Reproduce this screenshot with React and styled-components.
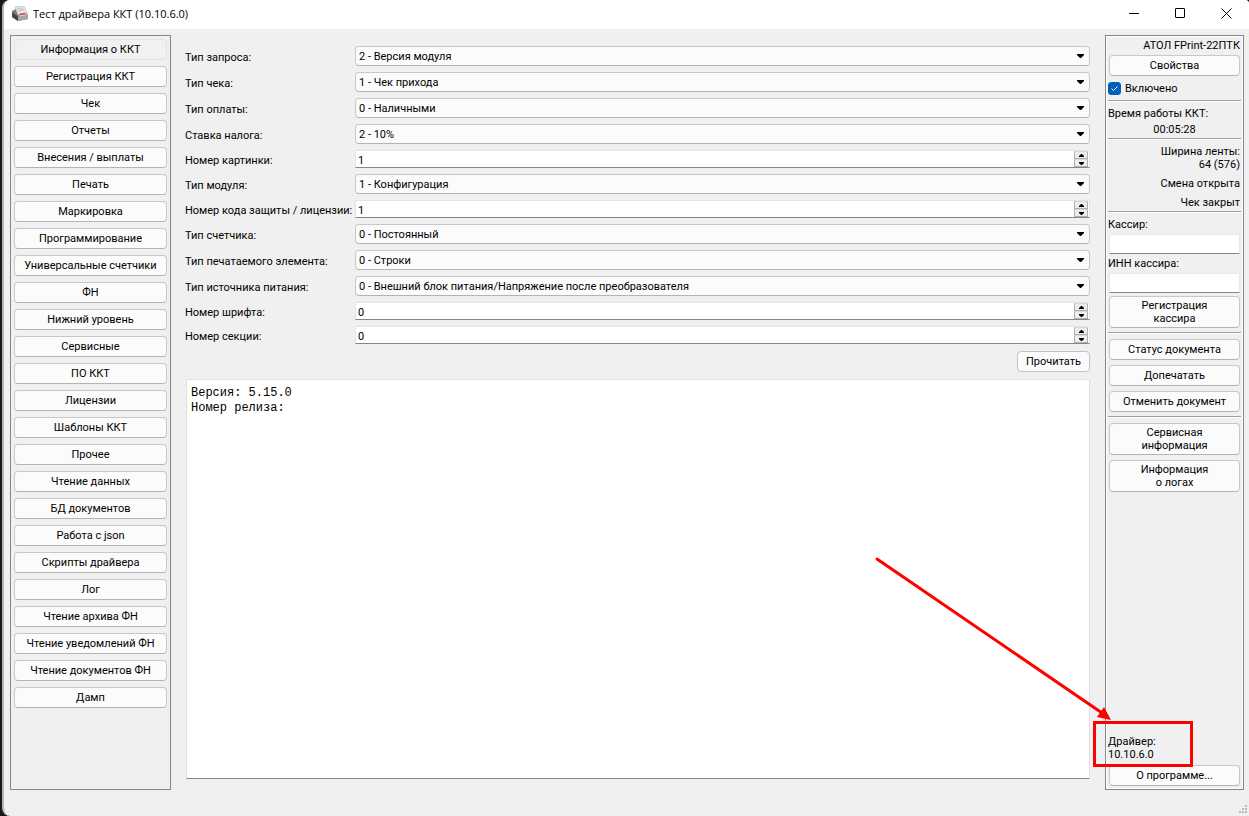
import React, { useState } from "react";
import styled, { createGlobalStyle } from "styled-components";

const navItems = [
  "Информация о ККТ",
  "Регистрация ККТ",
  "Чек",
  "Отчеты",
  "Внесения / выплаты",
  "Печать",
  "Маркировка",
  "Программирование",
  "Универсальные счетчики",
  "ФН",
  "Нижний уровень",
  "Сервисные",
  "ПО ККТ",
  "Лицензии",
  "Шаблоны ККТ",
  "Прочее",
  "Чтение данных",
  "БД документов",
  "Работа с json",
  "Скрипты драйвера",
  "Лог",
  "Чтение архива ФН",
  "Чтение уведомлений ФН",
  "Чтение документов ФН",
  "Дамп",
];

const fields = [
  { id: "request", label: "Тип запроса:", value: "2 - Версия модуля" },
  { id: "receipt", label: "Тип чека:", value: "1 - Чек прихода" },
  { id: "payment", label: "Тип оплаты:", value: "0 - Наличными" },
  { id: "tax", label: "Ставка налога:", value: "2 - 10%" },
  { id: "picture", label: "Номер картинки:", value: 1, spin: true },
  { id: "module", label: "Тип модуля:", value: "1 - Конфигурация" },
  { id: "license", label: "Номер кода защиты / лицензии:", value: 1, spin: true },
  { id: "counter", label: "Тип счетчика:", value: "0 - Постоянный" },
  { id: "element", label: "Тип печатаемого элемента:", value: "0 - Строки" },
  {
    id: "power",
    label: "Тип источника питания:",
    value: "0 - Внешний блок питания/Напряжение после преобразователя",
  },
  { id: "font", label: "Номер шрифта:", value: 0, spin: true },
  { id: "section", label: "Номер секции:", value: 0, spin: true },
];

function SpinBox({ id, initial }) {
  const [value, setValue] = useState(initial);

  return (
    <Spin>
      <input
        id={id}
        type="text"
        inputMode="numeric"
        value={value}
        onChange={(e) => setValue(Number(e.target.value) || 0)}
      />
      <div className="steps">
        <button type="button" aria-label="Больше" onClick={() => setValue(value + 1)}>
          <svg width="5" height="3" viewBox="0 0 5 3">
            <path d="M0 3V2L2 0H3L5 2V3z" />
          </svg>
        </button>
        <button
          type="button"
          aria-label="Меньше"
          onClick={() => setValue(Math.max(0, value - 1))}
        >
          <svg width="5" height="3" viewBox="0 0 5 3">
            <path d="M0 0V1L2 3H3L5 1V0z" />
          </svg>
        </button>
      </div>
    </Spin>
  );
}

function ComboBox({ id, value }) {
  return (
    <Combo>
      <select id={id} defaultValue={value}>
        <option>{value}</option>
      </select>
      <svg width="7" height="4" viewBox="0 0 7 4">
        <path d="M0 0H7V1L4 4H3L0 1z" />
      </svg>
    </Combo>
  );
}

function PrinterLogo() {
  return (
    <svg width="17" height="16" viewBox="0 0 17 16">
      <path d="M0 5L4 3L15 7L16 9V13L6 15L0 11z" fill="#7d7d7d" />
      <path d="M0 6L6 10.500V15L0 11z" fill="#454545" />
      <path d="M6 10.500L16 9V13L6 15z" fill="#a5a3a3" />
      <path d="M3 1L12 0L15 7L6 9z" fill="#e6e6e6" stroke="#b0b0b0" strokeWidth=".6" />
      <path d="M5 2L11 1.500L12.500 4.500L6.500 5.500z" fill="#cfd2d2" />
      <path d="M7 8L14 7L15 9L8 10.500z" fill="#e2d4d4" />
      <path d="M7.500 8.500L13.500 7.500" stroke="#d93b45" strokeWidth="1.300" />
    </svg>
  );
}

export default function App() {
  const [active, setActive] = useState(0);
  const [enabled, setEnabled] = useState(true);

  return (
    <>
      <GlobalStyle />
      <Desktop>
        <Window>
          <TitleBar>
            <PrinterLogo />
            <h1>Тест драйвера ККТ (10.10.6.0)</h1>
            <CaptionButton type="button" aria-label="Свернуть">
              <svg width="11" height="11" viewBox="0 0 11 11">
                <path d="M0 5.500H10" />
              </svg>
            </CaptionButton>
            <CaptionButton type="button" aria-label="Развернуть">
              <svg width="11" height="11" viewBox="0 0 11 11">
                <rect x=".5" y=".5" width="9" height="9" rx=".5" />
              </svg>
            </CaptionButton>
            <CaptionButton type="button" aria-label="Закрыть">
              <svg width="11" height="11" viewBox="0 0 11 11">
                <path d="M.5 .5L10.500 10.500M10.500 .5L.5 10.500" />
              </svg>
            </CaptionButton>
          </TitleBar>

          <Body>
            <NavPanel>
              {navItems.map((item, i) => (
                <Button
                  key={item}
                  type="button"
                  $active={i === active}
                  onClick={() => setActive(i)}
                >
                  {item}
                </Button>
              ))}
            </NavPanel>

            <Content>
              <Form>
                {fields.map((f) => (
                  <React.Fragment key={f.id}>
                    <label htmlFor={f.id}>{f.label}</label>
                    {f.spin ? (
                      <SpinBox id={f.id} initial={f.value} />
                    ) : (
                      <ComboBox id={f.id} value={f.value} />
                    )}
                  </React.Fragment>
                ))}
              </Form>
              <ReadButton type="button">Прочитать</ReadButton>
              <Output
                aria-label="Результат"
                readOnly
                value={"Версия: 5.15.0\nНомер релиза:"}
              />
            </Content>

            <StatusPanel>
              <Text $align="right">АТОЛ FPrint-22ПТК</Text>
              <Button type="button">Свойства</Button>
              <CheckLabel>
                <span className="box">
                  <input
                    type="checkbox"
                    checked={enabled}
                    onChange={() => setEnabled(!enabled)}
                  />
                  {enabled && (
                    <svg width="13" height="13" viewBox="0 0 13 13">
                      <path d="M3.500 6.500L5.500 8.500L9.500 4.500" />
                    </svg>
                  )}
                </span>
                Включено
              </CheckLabel>
              <Divider />
              <Group $bottom={2}>
                <Text>Время работы ККТ:</Text>
                <Text $align="center">00:05:28</Text>
              </Group>
              <Divider />
              <Group $gap={6} $bottom={2}>
                <Text $align="right">
                  Ширина ленты:
                  <br />
                  64 (576)
                </Text>
                <Text $align="right">Смена открыта</Text>
                <Text $align="right">Чек закрыт</Text>
              </Group>
              <Divider />
              <Group>
                <label htmlFor="cashier">Кассир:</label>
                <TextInput id="cashier" type="text" />
                <label htmlFor="inn">ИНН кассира:</label>
                <TextInput id="inn" type="text" />
                <Button type="button" $tall>
                  Регистрация
                  <br />
                  кассира
                </Button>
              </Group>
              <Divider />
              <Group $gap={5}>
                <Button type="button">Статус документа</Button>
                <Button type="button">Допечатать</Button>
                <Button type="button">Отменить документ</Button>
              </Group>
              <Divider />
              <Group $gap={5}>
                <Button type="button" $tall>
                  Сервисная
                  <br />
                  информация
                </Button>
                <Button type="button" $tall>
                  Информация
                  <br />о логах
                </Button>
              </Group>

              <Driver>
                <Text>
                  Драйвер:
                  <br />
                  10.10.6.0
                </Text>
                <Annotation width="320" height="212" viewBox="0 0 320 212">
                  <path d="M4 4L232 160" strokeWidth="3" strokeLinecap="round" />
                  <path d="M238 165L224 162L231 152z" fill="#f00" stroke="none" />
                  <rect x="221.500" y="167.500" width="97" height="43" strokeWidth="3" />
                </Annotation>
              </Driver>
              <Button type="button">О программе...</Button>
            </StatusPanel>
          </Body>

          <Footer>
            <svg width="12" height="12" viewBox="0 0 12 12">
              <path d="M8 1h2v2h-2zM8 4h2v2h-2zM8 7h2v2h-2zM5 4h2v2h-2zM5 7h2v2h-2zM2 7h2v2h-2z" />
            </svg>
          </Footer>
        </Window>
      </Desktop>
    </>
  );
}

const GlobalStyle = createGlobalStyle`
  * {
    box-sizing: border-box;
  }

  body {
    margin: 0;
  }

  body, button, input, select {
    font-family: Roboto, sans-serif;
    font-size: 11px;
    line-height: 13px;
    color: #000;
  }
`;

const Desktop = styled.div`
  display: flex;
  min-height: 100vh;
  padding-left: 2px;
  background: #1c1817;
`;

const Window = styled.div`
  flex: 1;
  display: flex;
  flex-direction: column;
  border-left: 2px solid #b4b4b4;
  border-radius: 8px 4px 0 8px;
  background: #f0f0f0;
  overflow: hidden;
`;

const TitleBar = styled.header`
  display: flex;
  align-items: center;
  height: 29px;
  padding: 0 0 2px 8px;
  background: #fff;

  h1 {
    flex: 1;
    margin: 0 0 0 4px;
    font-family: "Open Sans", "Noto Sans", sans-serif;
    font-size: 11px;
    font-weight: 400;
    line-height: 16px;
  }
`;

const CaptionButton = styled.button`
  display: flex;
  align-items: center;
  justify-content: center;
  width: 46px;
  height: 27px;
  padding: 0;
  border: none;
  background: none;

  svg {
    fill: none;
    stroke: #000;
  }
`;

const Body = styled.main`
  flex: 1;
  display: flex;
  padding: 6px 5px 0 6px;
`;

const NavPanel = styled.nav`
  display: flex;
  flex-direction: column;
  gap: 6px;
  width: 161px;
  padding: 3px;
  border: 1px solid #828790;
`;

const Button = styled.button`
  flex-shrink: 0;
  height: ${({ $tall }) => ($tall ? "32px" : "21px")};
  padding: 0 4px;
  border: 1px solid ${({ $active }) => ($active ? "#e2e2e2" : "#c8c8c8")};
  border-bottom-color: ${({ $active }) => ($active ? "#e2e2e2" : "#b4b4b4")};
  border-radius: 4px;
  background: ${({ $active }) => ($active ? "#f1f1f1" : "#fbfbfb")};
  white-space: nowrap;
`;

const ReadButton = styled(Button)`
  align-self: flex-end;
  width: 73px;
  margin: 7px 0;
  border-color: #bcc4ca;
`;

const Content = styled.section`
  flex: 1;
  display: flex;
  flex-direction: column;
  min-width: 0;
  padding: 11px 15px 11px 14px;
`;

const Form = styled.form`
  display: grid;
  grid-template-columns: 164px 1fr;
  gap: 6px;
  align-items: center;

  label {
    padding-top: 2px;
    white-space: nowrap;
  }
`;

const Combo = styled.div`
  display: grid;
  align-items: center;

  select,
  svg {
    grid-area: 1 / 1;
  }

  select {
    appearance: none;
    width: 100%;
    height: 20px;
    padding: 1px 20px 0 3px;
    border: 1px solid #c8c8c8;
    border-bottom-color: #b4b4b4;
    border-radius: 4px;
    background: #fbfbfb;
  }

  svg {
    justify-self: end;
    margin-right: 6px;
    pointer-events: none;
  }
`;

const Spin = styled.div`
  display: flex;
  height: 18px;
  border: 1px solid #e4e4e4;
  border-bottom-color: #868686;
  background: #fff;

  input {
    flex: 1;
    min-width: 0;
    padding: 2px 2px 0;
    border: none;
    background: none;
    outline: none;
  }

  .steps {
    display: flex;
    flex-direction: column;
    width: 14px;
    margin-right: 1px;
  }

  button {
    flex: 1;
    display: flex;
    align-items: center;
    justify-content: center;
    padding: 0;
    border: 1px solid #b0b0b0;
    border-top-color: #d8d8d8;
    background: #eee;
  }
`;

const Output = styled.textarea`
  flex: 1;
  margin-left: 1px;
  padding: 6px 4px;
  border: 1px solid #e0e0e0;
  border-bottom-color: #868686;
  background: #fff;
  color: #000;
  font-family: "Liberation Mono", monospace;
  font-size: 12px;
  line-height: 15px;
  resize: none;
  outline: none;
`;

const StatusPanel = styled.aside`
  display: flex;
  flex-direction: column;
  width: 139px;
  padding: 3px 2px;
  border: 1px solid #828790;
  box-shadow: inset -1px -1px #fff, inset 1px 1px #fff;

  button,
  input[type="text"] {
    margin: 0 1px;
  }
`;

const Text = styled.div`
  padding-right: ${({ $align }) => ($align === "right" ? "1px" : "0")};
  text-align: ${({ $align }) => $align || "left"};
  white-space: nowrap;

  ${StatusPanel} > & {
    margin-bottom: 3px;
  }
`;

const CheckLabel = styled.label`
  display: flex;
  align-items: center;
  gap: 4px;
  margin: 6px 0 5px;

  .box {
    display: grid;
  }

  input,
  svg {
    grid-area: 1 / 1;
  }

  input {
    appearance: none;
    width: 13px;
    height: 13px;
    margin: 0;
    border: 1px solid #005fb8;
    border-radius: 3px;
    background: #fff;
  }

  input:checked {
    background: #005fb8;
  }

  svg {
    z-index: 1;
    pointer-events: none;
    fill: none;
    stroke: #fff;
  }
`;

const Divider = styled.hr`
  flex-shrink: 0;
  width: 100%;
  height: 2px;
  margin: 0;
  border: none;
  border-top: 1px solid #a0a0a0;
  border-bottom: 1px solid #fff;
`;

const Group = styled.div`
  display: flex;
  flex-direction: column;
  gap: ${({ $gap }) => $gap || 3}px;
  padding: 5px 0 ${({ $bottom }) => $bottom || 4}px;
`;

const TextInput = styled.input`
  height: 20px;
  padding: 0 3px;
  border: 1px solid #e8e8e8;
  border-bottom-color: #868686;
  background: #fff;
  outline: none;
`;

const Driver = styled.div`
  position: relative;
  margin-top: auto;
  padding-bottom: 4px;
`;

// red call-out over the driver version, arrow comes in from the upper left
const Annotation = styled.svg`
  position: absolute;
  right: 48px;
  bottom: -2px;
  fill: none;
  stroke: #f00;
  pointer-events: none;
`;

const Footer = styled.footer`
  display: flex;
  align-items: flex-end;
  justify-content: flex-end;
  height: 26px;

  svg {
    fill: #b8b8b8;
  }
`;
